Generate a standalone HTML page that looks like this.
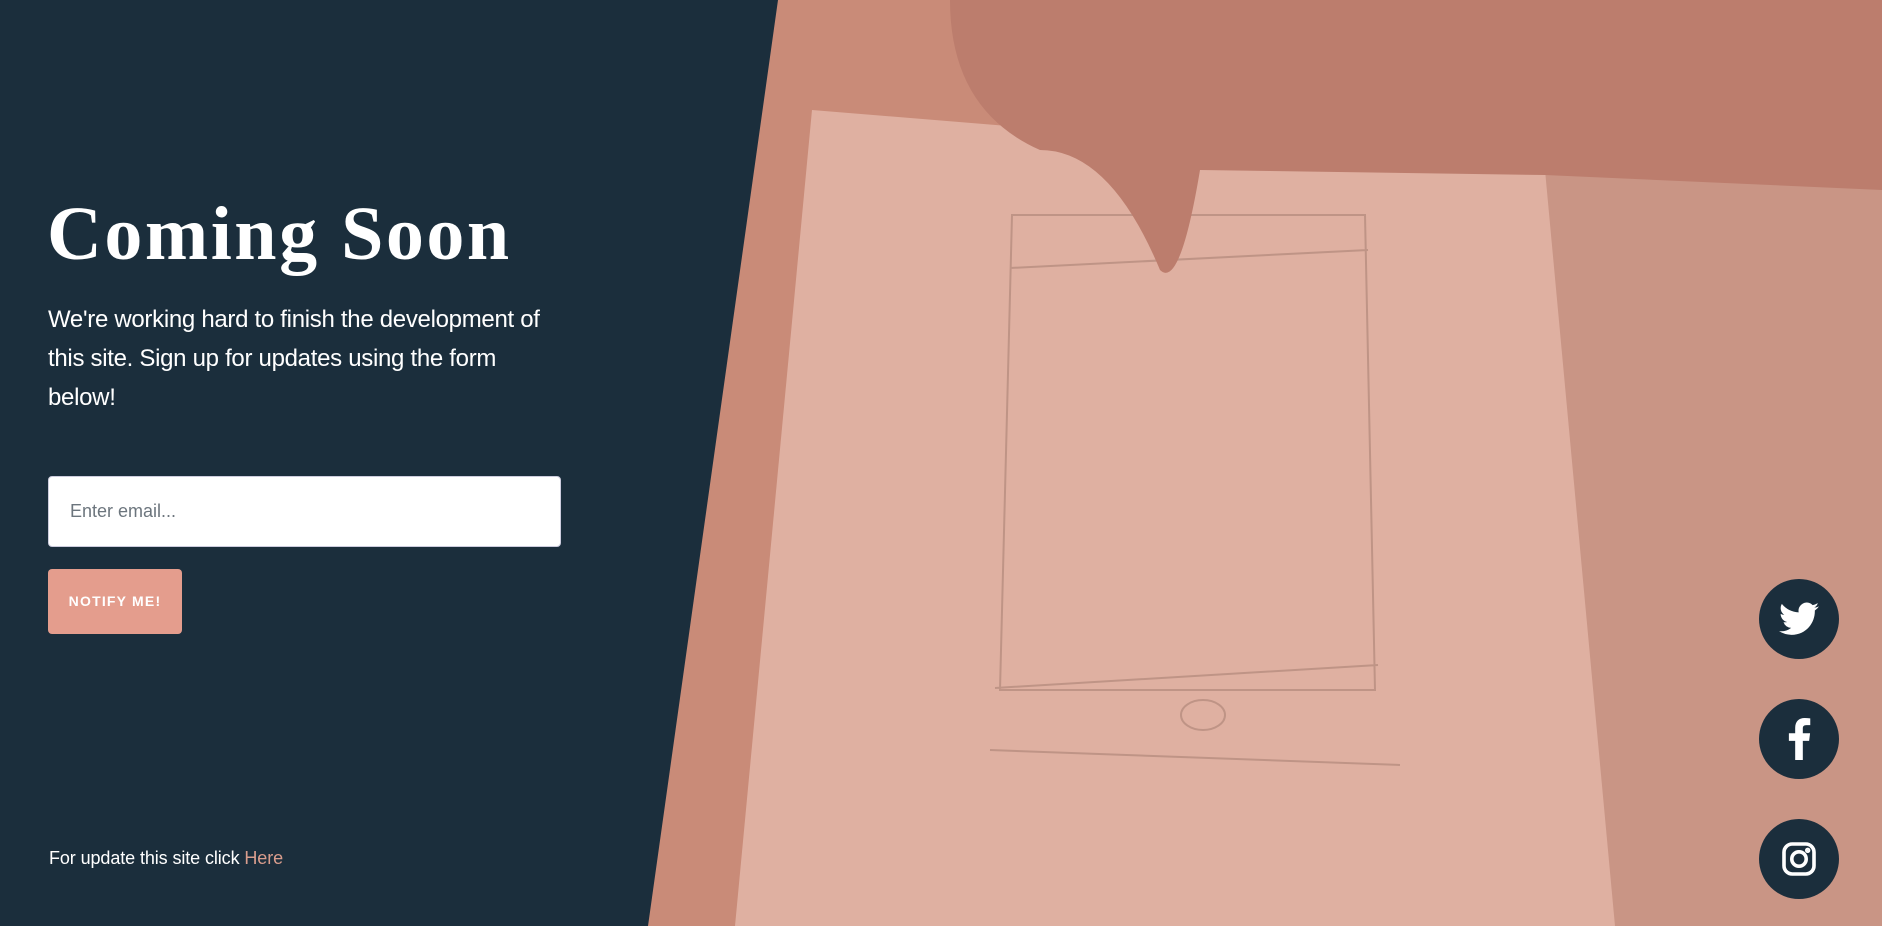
<!DOCTYPE html>
<html><head><meta charset="utf-8"><style>
*{margin:0;padding:0;box-sizing:border-box}
html,body{width:1882px;height:926px;overflow:hidden}
body{position:relative;background:#c98b78;font-family:"Liberation Sans",sans-serif}
.bg{position:absolute;inset:0}
.left{position:absolute;inset:0;background:#1b2e3c;clip-path:polygon(0 0,778px 0,648px 926px,0 926px)}
h1{position:absolute;left:47px;top:196px;font-family:"Liberation Serif",serif;font-weight:bold;font-size:76px;color:#fff;line-height:1;letter-spacing:2.5px}
p.d{position:absolute;left:48px;top:300px;color:#fff;font-size:24px;line-height:39px;font-weight:300;letter-spacing:-0.3px;white-space:nowrap}
.inp{position:absolute;left:48px;top:476px;width:513px;height:71px;background:#fff;border:1px solid #ccd;border-radius:4px;padding-left:21px;line-height:69px;font-size:18px;color:#6c757d}
.btn{position:absolute;left:48px;top:569px;width:134px;height:65px;background:#e49d8d;border-radius:4px;color:#fff;font-weight:bold;font-size:14px;letter-spacing:1.2px;text-align:center;line-height:65px}
.ft{position:absolute;left:49px;top:848px;color:#fff;font-size:18px;letter-spacing:-0.1px}
.ft span{color:#d99d8d}
.s{position:absolute;left:1759px;width:80px;height:80px;border-radius:50%;background:#1b2e3c;display:flex;align-items:center;justify-content:center}
</style></head><body>
<svg class="bg" width="1882" height="926">
<rect width="1882" height="926" fill="#c98b78"/>
<rect x="1540" y="170" width="342" height="756" fill="#c99585"/>
<polygon points="812,110 1545,170 1615,926 735,926" fill="#dfb0a1"/>
<path d="M1012 215 L1365 215 L1375 690 L1000 690 Z M1010 268 L1368 250 M995 688 L1378 665 M990 750 L1400 765" stroke="#bf9486" stroke-width="2" fill="none"/>
<ellipse cx="1203" cy="715" rx="22" ry="15" stroke="#bf9486" stroke-width="2" fill="none"/>
<path d="M950 0 L1882 0 L1882 190 L1545 175 L1200 170 Q1180 290 1160 270 Q1110 150 1040 150 Q950 110 950 0Z" fill="#bc7d6d"/>
</svg>
<div class="left"></div>
<h1>Coming Soon</h1>
<p class="d">We're working hard to finish the development of<br>this site. Sign up for updates using the form<br>below!</p>
<div class="inp">Enter email...</div>
<div class="btn">NOTIFY ME!</div>
<div class="ft">For update this site click <span>Here</span></div>
<div class="s" style="top:579px"><svg width="40" height="34" viewBox="0 0 24 20"><path fill="#fff" d="M24 2.4a10 10 0 0 1-2.8.8A5 5 0 0 0 23.3.5a10 10 0 0 1-3.1 1.2A4.9 4.9 0 0 0 11.8 6 14 14 0 0 1 1.7.9a4.9 4.9 0 0 0 1.5 6.6 4.9 4.9 0 0 1-2.2-.6 4.9 4.9 0 0 0 3.9 4.9 4.9 4.9 0 0 1-2.2.1 4.9 4.9 0 0 0 4.6 3.4A9.9 9.9 0 0 1 0 17.3 14 14 0 0 0 7.5 19.5c9.1 0 14-7.5 14-14v-.6A10 10 0 0 0 24 2.4z"/></svg></div>
<div class="s" style="top:699px"><svg width="24" height="42" viewBox="0 0 12 22"><path fill="#fff" d="M8 22V12h3.3l.5-4H8V5.6c0-1.1.3-1.9 1.9-1.9h2V.2A27 27 0 0 0 9 0C6 0 4 1.8 4 5.2V8H.7v4H4v10z"/></svg></div>
<div class="s" style="top:819px"><svg width="36" height="36" viewBox="0 0 24 24" fill="none" stroke="#fff" stroke-width="2.4"><rect x="2" y="2" width="20" height="20" rx="5.5"/><circle cx="12" cy="12" r="4.8"/><circle cx="17.8" cy="6.2" r="0.6" fill="#fff"/></svg></div>
</body></html>
